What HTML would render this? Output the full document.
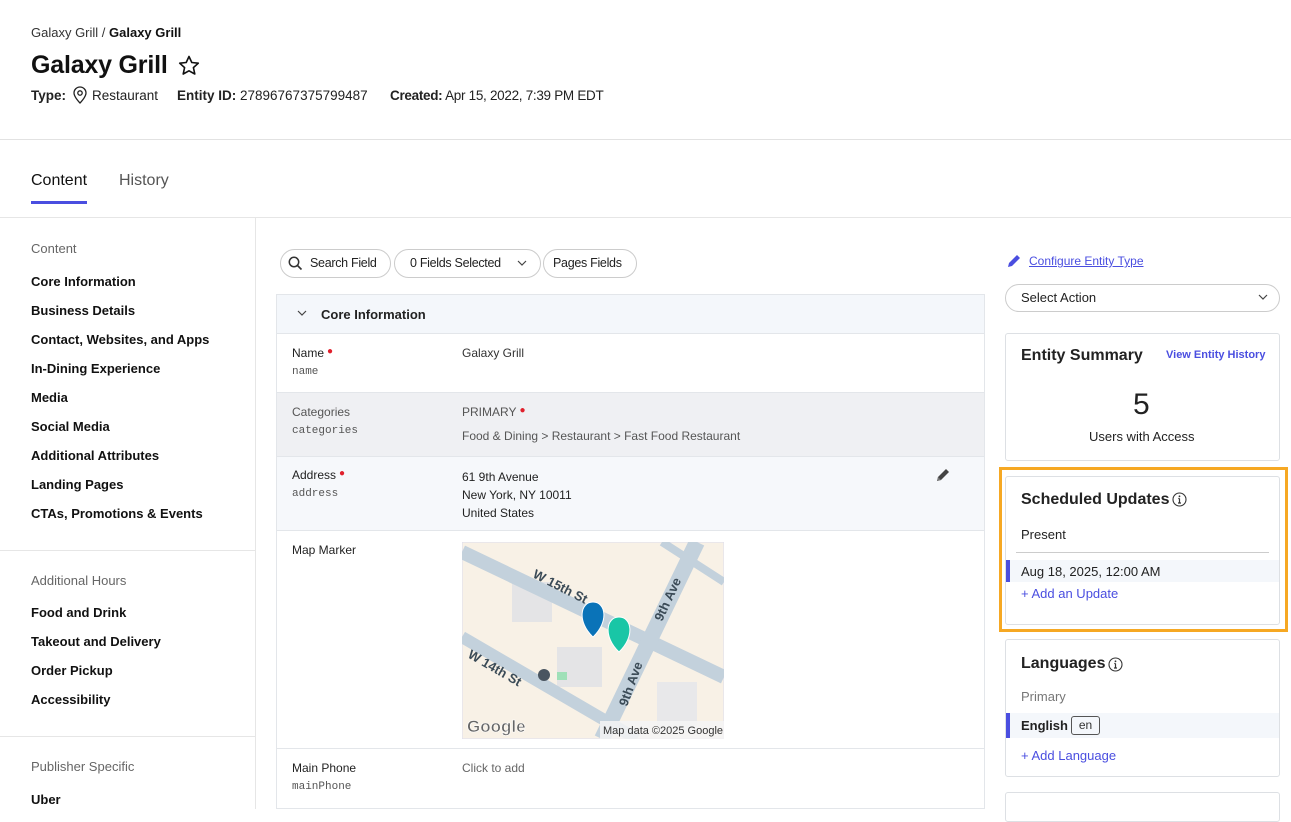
<!DOCTYPE html>
<html><head><meta charset="utf-8">
<style>
*{margin:0;padding:0;box-sizing:border-box}
body{width:1291px;height:809px;overflow:hidden;background:#fff;font-family:"Liberation Sans",Arial,sans-serif;color:#1f1f1f;position:relative}
.a{position:absolute;white-space:nowrap}
.b{font-weight:bold}
.mono{font-family:"Liberation Mono",monospace;font-size:11px;color:#555}
.nav{position:absolute;left:31px;font-size:13px;font-weight:bold;color:#111;white-space:nowrap}
.lbl{font-size:13px;color:#666;left:31px;position:absolute}
.pill{position:absolute;top:249px;height:29px;border:1px solid #ccc;border-radius:15px;font-size:12.5px;line-height:27px;padding:0 9px;color:#222;white-space:nowrap;overflow:hidden}
.row{position:absolute;left:276px;width:709px;border:1px solid #e3e6ea;border-top:none}
.card{position:absolute;left:1005px;width:275px;border:1px solid #dde0e4;border-radius:3px;background:#fff}
.dot{color:#e0202c;font-size:10px;vertical-align:top;margin-left:3px}
.lnk{color:#4a4ee0}
</style></head><body>
<div class="a" style="left:31px;top:25px;font-size:13px;color:#333">Galaxy Grill / <b style="color:#111">Galaxy Grill</b></div>
<div class="a b" style="left:31px;top:51px;font-size:25px;color:#111;letter-spacing:-0.2px">Galaxy Grill</div>
<svg class="a" style="left:177px;top:54px" width="24" height="24" viewBox="0 0 24 24"><path d="M12 2.5l2.8 6 6.5.7-4.9 4.4 1.4 6.4L12 16.8 6.2 20l1.4-6.4L2.7 9.2l6.5-.7z" fill="none" stroke="#111" stroke-width="1.6" stroke-linejoin="round"/></svg>
<div class="a" style="left:31px;top:88px;font-size:13.5px;color:#222"><b>Type:</b></div>
<svg class="a" style="left:72px;top:86px" width="16" height="18" viewBox="0 0 16 18"><path d="M8 17s-6-6-6-10a6 6 0 0 1 12 0c0 4-6 10-6 10z" fill="none" stroke="#222" stroke-width="1.3"/><circle cx="8" cy="7" r="2.2" fill="none" stroke="#222" stroke-width="1.3"/></svg>
<div class="a" style="left:92px;top:88px;font-size:13.5px;color:#222">Restaurant</div>
<div class="a" style="left:177px;top:88px;font-size:13.5px;color:#222"><b>Entity ID:</b> 27896767375799487</div>
<div class="a" style="left:390px;top:88px;font-size:13.5px;color:#222;letter-spacing:-0.3px"><b>Created:</b> Apr 15, 2022, 7:39 PM EDT</div>
<div class="a" style="left:0;top:139px;width:1291px;height:1px;background:#e2e2e2"></div>
<div class="a" style="left:31px;top:172px;font-size:16px;color:#111">Content</div>
<div class="a" style="left:119px;top:172px;font-size:16px;color:#555">History</div>
<div class="a" style="left:31px;top:201px;width:56px;height:3px;background:#4a4ee0"></div>
<div class="a" style="left:0;top:217px;width:1291px;height:1px;background:#e6e6e6"></div>
<div class="a" style="left:255px;top:218px;width:1px;height:591px;background:#e6e6e6"></div>

<div class="lbl" style="top:241px">Content</div>
<div class="nav" style="top:274px">Core Information</div>
<div class="nav" style="top:303px">Business Details</div>
<div class="nav" style="top:332px">Contact, Websites, and Apps</div>
<div class="nav" style="top:361px">In-Dining Experience</div>
<div class="nav" style="top:390px">Media</div>
<div class="nav" style="top:419px">Social Media</div>
<div class="nav" style="top:448px">Additional Attributes</div>
<div class="nav" style="top:477px">Landing Pages</div>
<div class="nav" style="top:506px">CTAs, Promotions &amp; Events</div>
<div class="a" style="left:0;top:550px;width:255px;height:1px;background:#e6e6e6"></div>
<div class="lbl" style="top:573px">Additional Hours</div>
<div class="nav" style="top:605px">Food and Drink</div>
<div class="nav" style="top:634px">Takeout and Delivery</div>
<div class="nav" style="top:663px">Order Pickup</div>
<div class="nav" style="top:692px">Accessibility</div>
<div class="a" style="left:0;top:736px;width:255px;height:1px;background:#e6e6e6"></div>
<div class="lbl" style="top:759px">Publisher Specific</div>
<div class="nav" style="top:792px">Uber</div>

<div class="pill" style="left:280px;width:111px;padding-left:29px;letter-spacing:-0.3px">Search Field</div>
<svg class="a" style="left:288px;top:256px" width="15" height="15" viewBox="0 0 15 15"><circle cx="6" cy="6" r="4.7" fill="none" stroke="#333" stroke-width="1.5"/><path d="M9.5 9.5l4 4" stroke="#333" stroke-width="1.6"/></svg>
<div class="pill" style="left:394px;width:147px;padding-left:15px;letter-spacing:-0.3px">0 Fields Selected</div>
<svg class="a" style="left:517px;top:260px" width="10" height="7" viewBox="0 0 10 7"><path d="M1 1l4 4 4-4" fill="none" stroke="#444" stroke-width="1.2"/></svg>
<div class="pill" style="left:543px;width:94px;letter-spacing:-0.3px">Pages Fields</div>

<div class="row" style="top:294px;height:40px;background:#f4f7fb;border-top:1px solid #e3e6ea"></div>
<svg class="a" style="left:297px;top:310px" width="10" height="7" viewBox="0 0 10 7"><path d="M1 1l4 4 4-4" fill="none" stroke="#444" stroke-width="1.2"/></svg>
<div class="a b" style="left:321px;top:307px;font-size:13px;color:#222">Core Information</div>
<div class="row" style="top:334px;height:59px"></div>
<div class="a" style="left:292px;top:346px;font-size:12px">Name<span class="dot">●</span></div>
<div class="a mono" style="left:292px;top:366px">name</div>
<div class="a" style="left:462px;top:346px;font-size:12px;color:#333">Galaxy Grill</div>
<div class="row" style="top:393px;height:64px;background:#eff0f3"></div>
<div class="a" style="left:292px;top:405px;font-size:12px;color:#555">Categories</div>
<div class="a mono" style="left:292px;top:425px">categories</div>
<div class="a" style="left:462px;top:405px;font-size:12px;color:#555">PRIMARY<span class="dot">●</span></div>
<div class="a" style="left:462px;top:429px;font-size:12px;color:#555">Food &amp; Dining &gt; Restaurant &gt; Fast Food Restaurant</div>
<div class="row" style="top:457px;height:74px;background:#f6f8fb"></div>
<div class="a" style="left:292px;top:468px;font-size:12px">Address<span class="dot">●</span></div>
<div class="a mono" style="left:292px;top:488px">address</div>
<div class="a" style="left:462px;top:468px;font-size:12px;line-height:18px;color:#222">61 9th Avenue<br>New York, NY 10011<br>United States</div>
<svg class="a" style="left:935px;top:467px" width="16" height="16" viewBox="0 0 16 16"><path d="M2 14l1-4 8-8 3 3-8 8z" fill="#444"/><path d="M2 14l1-4 3 3z" fill="#777"/></svg>
<div class="row" style="top:531px;height:218px"></div>
<div class="a" style="left:292px;top:543px;font-size:12px">Map Marker</div>
<svg class="a" style="left:462px;top:542px" width="262" height="197" viewBox="0 0 262 197">
<rect width="262" height="197" fill="#f8f1e6" stroke="#dde" />
<rect x="50" y="40" width="40" height="40" fill="#e4e4e6"/>
<rect x="95" y="105" width="45" height="40" fill="#e4e4e6"/>
<rect x="195" y="140" width="40" height="50" fill="#e8e8ea"/>
<path d="M0 10 L262 135" stroke="#c3d1dc" stroke-width="14"/>
<path d="M0 95 L175 197" stroke="#c3d1dc" stroke-width="12"/>
<path d="M235 0 L140 197" stroke="#c3d1dc" stroke-width="16"/>
<path d="M200 0 L262 40" stroke="#c3d1dc" stroke-width="8"/>
<rect x="95" y="130" width="10" height="8" fill="#9fe0b8"/>
<text x="70" y="35" transform="rotate(27 70 35)" font-family="Liberation Sans" font-size="13" font-weight="bold" fill="#3b4b57">W 15th St</text>
<text x="5" y="115" transform="rotate(30 5 115)" font-family="Liberation Sans" font-size="13" font-weight="bold" fill="#3b4b57">W 14th St</text>
<text x="200" y="80" transform="rotate(-65 200 80)" font-family="Liberation Sans" font-size="13" font-weight="bold" fill="#3b4b57">9th Ave</text>
<text x="165" y="165" transform="rotate(-70 165 165)" font-family="Liberation Sans" font-size="13" font-weight="bold" fill="#3b4b57">9th Ave</text>
<path d="M131 95 C115 80 118 60 131 60 C144 60 147 80 131 95z" fill="#0a73b8" stroke="#fff"/>
<path d="M157 110 C141 95 144 75 157 75 C170 75 173 95 157 110z" fill="#19c6a6" stroke="#fff"/>
<circle cx="82" cy="133" r="6" fill="#4a5560"/>
<text x="5" y="190" font-family="Liberation Sans" font-size="17" font-weight="bold" fill="#666" stroke="#fff" stroke-width="0.6">Google</text>
<rect x="138" y="179" width="124" height="18" fill="#f5f5f5" opacity="0.85"/>
<text x="141" y="192" font-family="Liberation Sans" font-size="11" fill="#333">Map data ©2025 Google</text>
</svg>
<div class="row" style="top:749px;height:60px"></div>
<div class="a" style="left:292px;top:761px;font-size:12px">Main Phone</div>
<div class="a mono" style="left:292px;top:781px">mainPhone</div>
<div class="a" style="left:462px;top:761px;font-size:12px;color:#666">Click to add</div>

<svg class="a" style="left:1006px;top:253px" width="16" height="16" viewBox="0 0 16 16"><path d="M2 14l1-4 8-8 3 3-8 8z" fill="#4a4ee0"/></svg>
<div class="a lnk" style="left:1029px;top:254px;font-size:12px;text-decoration:underline">Configure Entity Type</div>
<div class="a" style="left:1005px;top:284px;width:275px;height:28px;border:1px solid #ccc;border-radius:14px;font-size:13px;line-height:26px;padding-left:15px">Select Action</div>
<svg class="a" style="left:1258px;top:294px" width="10" height="7" viewBox="0 0 10 7"><path d="M1 1l4 4 4-4" fill="none" stroke="#444" stroke-width="1.2"/></svg>

<div class="card" style="top:333px;height:128px"></div>
<div class="a b" style="left:1021px;top:347px;font-size:16px;color:#222">Entity Summary</div>
<div class="a b lnk" style="left:1166px;top:349px;font-size:11px">View Entity History</div>
<div class="a" style="left:1133px;top:388px;font-size:30px;color:#222">5</div>
<div class="a" style="left:1089px;top:429px;font-size:13px;color:#222">Users with Access</div>

<div class="a" style="left:999px;top:467px;width:289px;height:165px;border:3px solid #f6a823"></div>
<div class="card" style="top:476px;height:149px"></div>
<div class="a b" style="left:1021px;top:491px;font-size:16px;color:#222">Scheduled Updates</div>
<svg class="a" style="left:1172px;top:492px" width="15" height="15" viewBox="0 0 15 15"><circle cx="7.5" cy="7.5" r="6.5" fill="none" stroke="#333" stroke-width="1.1"/><path d="M7.5 6.5v4.5M6 11h3M6.3 6.5h1.2" stroke="#333" stroke-width="1.2"/><circle cx="7.5" cy="4.3" r="0.9" fill="#333"/></svg>
<div class="a" style="left:1021px;top:527px;font-size:13px;color:#222">Present</div>
<div class="a" style="left:1016px;top:552px;width:253px;height:1px;background:#ccc"></div>
<div class="a" style="left:1006px;top:560px;width:273px;height:22px;background:#f4f7fb;border-left:4px solid #4a4ee0"></div>
<div class="a" style="left:1021px;top:564px;font-size:13px;color:#222">Aug 18, 2025, 12:00 AM</div>
<div class="a lnk" style="left:1021px;top:586px;font-size:13px">+ Add an Update</div>

<div class="card" style="top:639px;height:138px"></div>
<div class="a b" style="left:1021px;top:655px;font-size:16px;color:#222">Languages</div>
<svg class="a" style="left:1108px;top:657px" width="15" height="15" viewBox="0 0 15 15"><circle cx="7.5" cy="7.5" r="6.5" fill="none" stroke="#333" stroke-width="1.1"/><path d="M7.5 6.5v4.5M6 11h3M6.3 6.5h1.2" stroke="#333" stroke-width="1.2"/><circle cx="7.5" cy="4.3" r="0.9" fill="#333"/></svg>
<div class="a" style="left:1021px;top:689px;font-size:13px;color:#777">Primary</div>
<div class="a" style="left:1006px;top:713px;width:273px;height:25px;background:#f4f7fb;border-left:4px solid #4a4ee0"></div>
<div class="a b" style="left:1021px;top:718px;font-size:13px;color:#222">English</div>
<div class="a" style="left:1071px;top:716px;width:29px;height:19px;border:1px solid #555;border-radius:3px;font-size:12px;line-height:17px;text-align:center;color:#333">en</div>
<div class="a lnk" style="left:1021px;top:748px;font-size:13px">+ Add Language</div>
<div class="card" style="top:792px;height:30px"></div>
</body></html>
